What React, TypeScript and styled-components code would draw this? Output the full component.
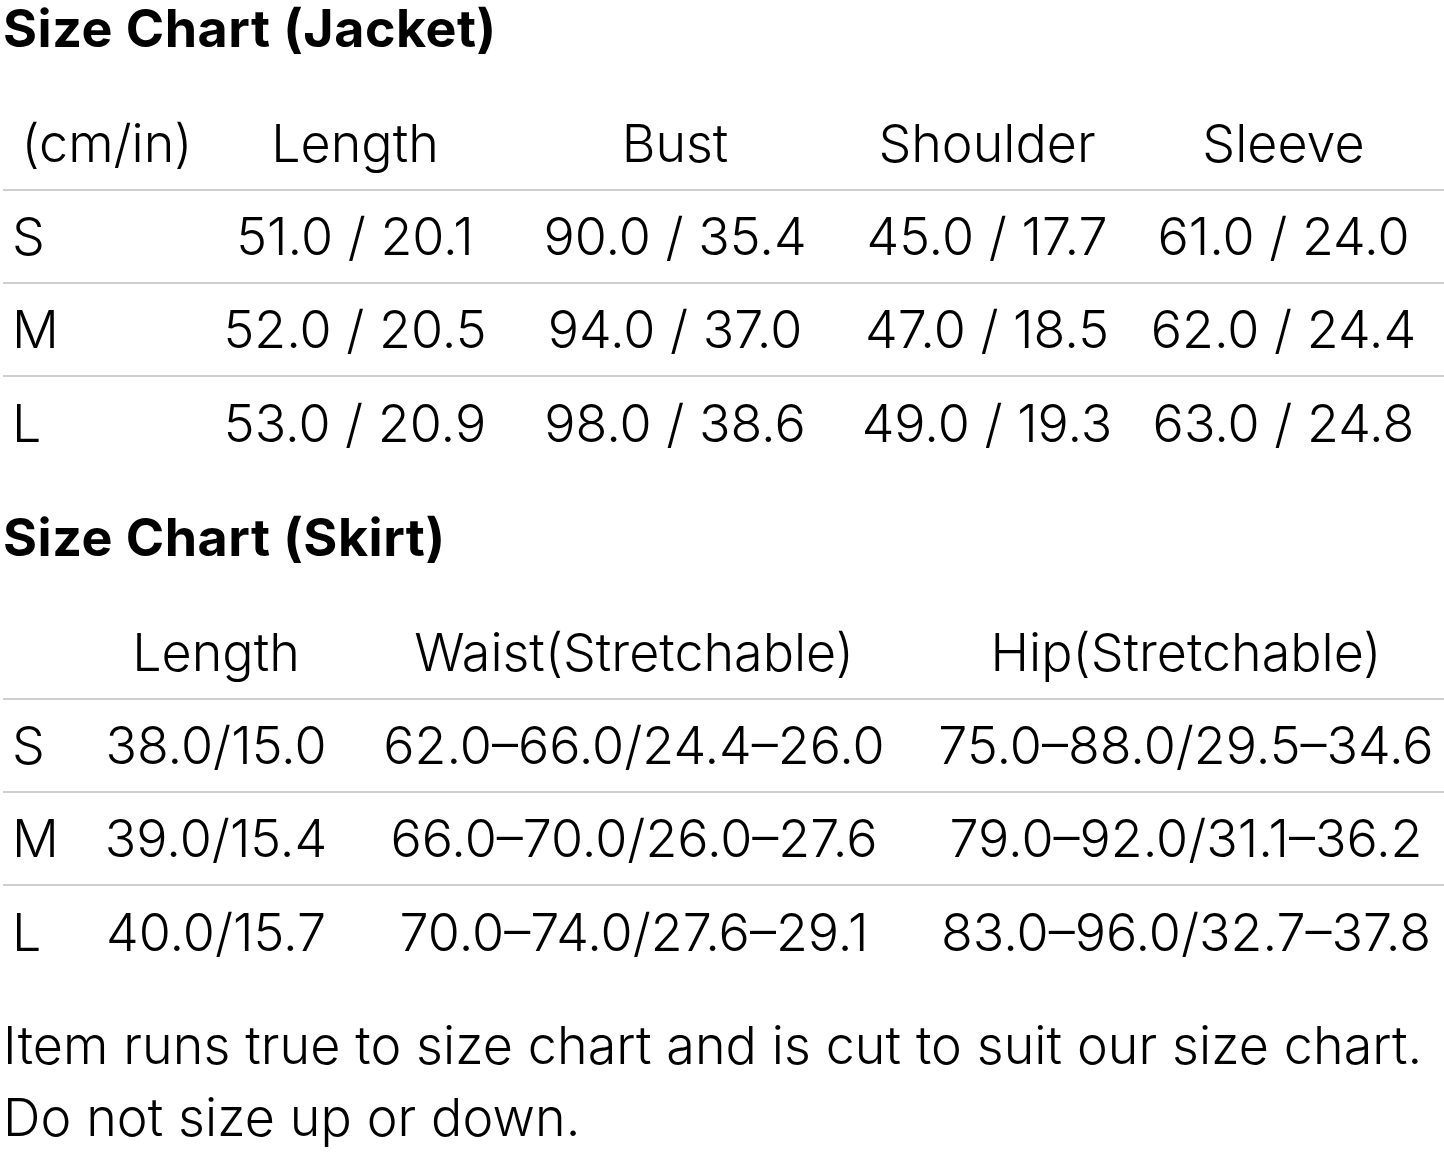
import React from "react"
import styled, { createGlobalStyle } from "styled-components"

const GlobalStyle = createGlobalStyle`
    html, body {
        margin: 0;
        padding: 0;
        background: #ffffff;
    }
    body {
        font-family: Inter, "Noto Sans", "Liberation Sans", sans-serif;
        color: #000000;
    }
`

const Page = styled.div`
    width: 1444px;
    padding-left: 3px;
    box-sizing: border-box;
`

const Title = styled.h2`
    margin: 0 0 41px 0;
    font-size: 52px;
    line-height: 57px;
    font-weight: 700;
    letter-spacing: 0.5px;
`

const Table = styled.div<{ $space: number }>`
    display: flex;
    flex-direction: column;
    margin-bottom: ${props => props.$space}px;
`

const Row = styled.div<{ $columns: string; $last?: boolean }>`
    display: grid;
    grid-template-columns: ${props => props.$columns};
    height: 93px;
    box-sizing: border-box;
    border-bottom: ${props => props.$last ? 'none' : '2px solid #cfcfcf'};
`

const Cell = styled.div<{ $align?: 'center' | 'left' }>`
    display: flex;
    align-items: center;
    justify-content: ${props => props.$align === 'left' ? 'flex-start' : 'center'};
    padding-left: ${props => props.$align === 'left' ? '9px' : '0'};
    font-size: 52px;
    font-weight: 300;
    white-space: nowrap;
`

const Note = styled.p`
    margin: 0;
    font-size: 52px;
    line-height: 72px;
    font-weight: 300;
    letter-spacing: 0.1px;
    white-space: nowrap;
`

type Chart = {
    title: string
    columns: string
    space: number
    head: string[]
    rows: string[][]
}

const charts: Chart[] = [
    {
        title: 'Size Chart (Jacket)',
        columns: '208px 288px 352px 272px 1fr',
        space: 39,
        head: ['(cm/in)', 'Length', 'Bust', 'Shoulder', 'Sleeve'],
        rows: [
            ['S', '51.0 / 20.1', '90.0 / 35.4', '45.0 / 17.7', '61.0 / 24.0'],
            ['M', '52.0 / 20.5', '94.0 / 37.0', '47.0 / 18.5', '62.0 / 24.4'],
            ['L', '53.0 / 20.9', '98.0 / 38.6', '49.0 / 19.3', '63.0 / 24.8'],
        ],
    },
    {
        title: 'Size Chart (Skirt)',
        columns: '104px 218px 618px 486px 1fr',
        space: 31,
        head: ['', 'Length', 'Waist(Stretchable)', 'Hip(Stretchable)'],
        rows: [
            ['S', '38.0/15.0', '62.0–66.0/24.4–26.0', '75.0–88.0/29.5–34.6'],
            ['M', '39.0/15.4', '66.0–70.0/26.0–27.6', '79.0–92.0/31.1–36.2'],
            ['L', '40.0/15.7', '70.0–74.0/27.6–29.1', '83.0–96.0/32.7–37.8'],
        ],
    },
]

export default function App() {
    return (
        <Page>
            <GlobalStyle />
            {charts.map(chart => (
                <section key={chart.title}>
                    <Title>{chart.title}</Title>
                    <Table $space={chart.space}>
                        <Row $columns={chart.columns}>
                            {chart.head.map((h, i) => <Cell key={i}>{h}</Cell>)}
                        </Row>
                        {chart.rows.map((r, ri) => (
                            <Row key={ri} $columns={chart.columns} $last={ri === chart.rows.length - 1}>
                                {r.map((c, ci) => (
                                    <Cell key={ci} $align={ci === 0 ? 'left' : 'center'}>{c}</Cell>
                                ))}
                            </Row>
                        ))}
                    </Table>
                </section>
            ))}
            <Note>
                Item runs true to size chart and is cut to suit our size chart.
                <br />
                Do not size up or down.
            </Note>
        </Page>
    )
}
